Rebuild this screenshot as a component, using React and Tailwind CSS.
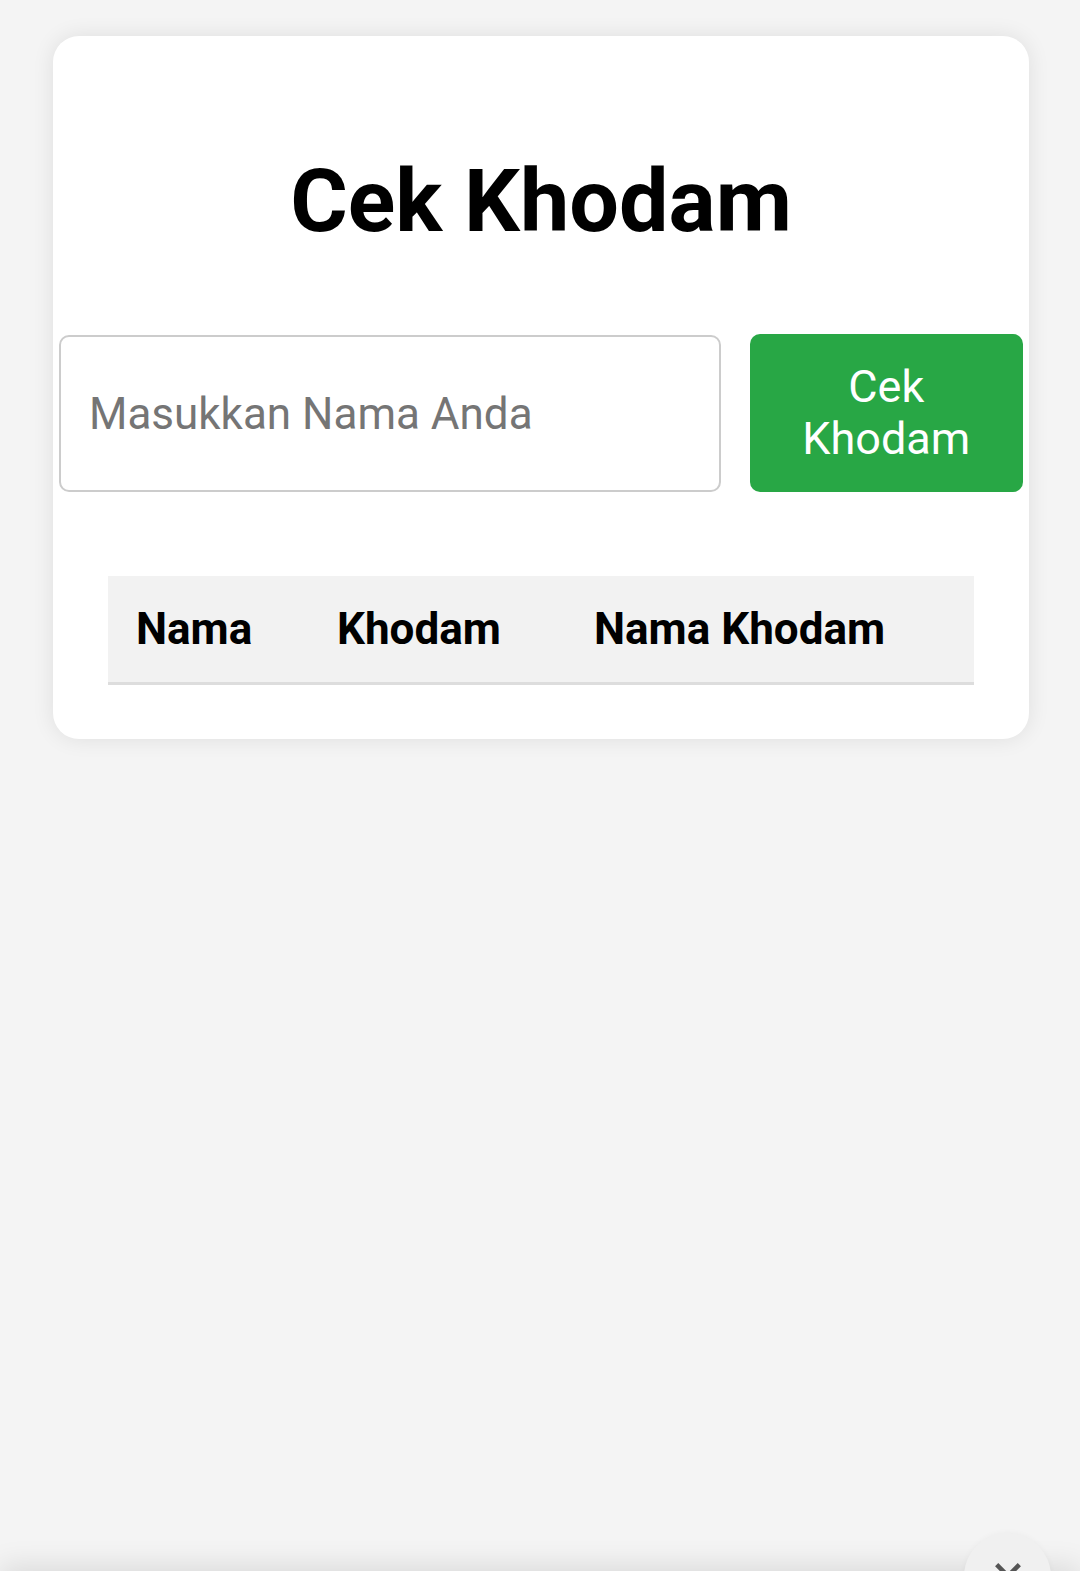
import { useState } from 'react'

const columns = [
  { label: 'Nama', width: 'w-[201px]' },
  { label: 'Khodam', width: 'w-[257px]' },
  { label: 'Nama Khodam', width: '' },
]

const App = () => {
  const [nama, setNama] = useState('')

  return (
    <div className="relative min-h-[1571px] overflow-hidden bg-[#f4f4f4] font-['Roboto',sans-serif]">
      <div className="pt-[36px] pl-[53px]">
        <div className="w-[976px] h-[703px] rounded-[26px] bg-white shadow-[0_0_22px_rgba(0,0,0,0.09)]">
          <h1 className="pt-[113px] text-center text-[88px] font-bold leading-[103px] text-black">
            Cek Khodam
          </h1>

          <div className="mt-[83px] flex items-stretch gap-[29px] px-[6px]">
            <input
              type="text"
              value={nama}
              onChange={(e) => setNama(e.target.value)}
              placeholder="Masukkan Nama Anda"
              className="h-[157px] w-[663px] rounded-[10px] border-2 border-[#cccccc] pl-[28px] text-[44px] text-black placeholder:text-[#757575] outline-none"
            />
            <button className="h-[158px] -mt-px w-[274px] rounded-[10px] bg-[#28a745] text-[45px] leading-[52px] text-white">
              Cek
              <br />
              Khodam
            </button>
          </div>

          <div className="mt-[84px] px-[55px]">
            <table className="w-full border-collapse">
              <thead>
                <tr className="bg-[#f2f2f2] border-b-[3px] border-[#dddddd]">
                  {columns.map((col) => (
                    <th
                      key={col.label}
                      className={`${col.width} h-[107px] pl-[28px] text-left text-[44px] font-bold leading-[52px] text-black`}
                    >
                      {col.label}
                    </th>
                  ))}
                </tr>
              </thead>
              <tbody />
            </table>
          </div>
        </div>
      </div>

      {/* bar below the fold that casts a shadow */}
      <div className="absolute left-0 right-0 top-[1571px] h-20 bg-white shadow-[0_-6px_28px_rgba(0,0,0,0.10)]" />

      {/* close button, cut off at the bottom */}
      <div className="absolute left-[964px] top-[1533px] flex h-[87px] w-[87px] justify-center rounded-full bg-[#f0f0f0] shadow-[0_0_6px_rgba(0,0,0,0.04)]">
        <svg width="34" height="34" viewBox="0 0 24 24" className="mt-[26px]" fill="none" stroke="#555555" strokeWidth="3.2">
          <path d="M4 4l16 16M20 4L4 20" />
        </svg>
      </div>
    </div>
  )
}

export default App
